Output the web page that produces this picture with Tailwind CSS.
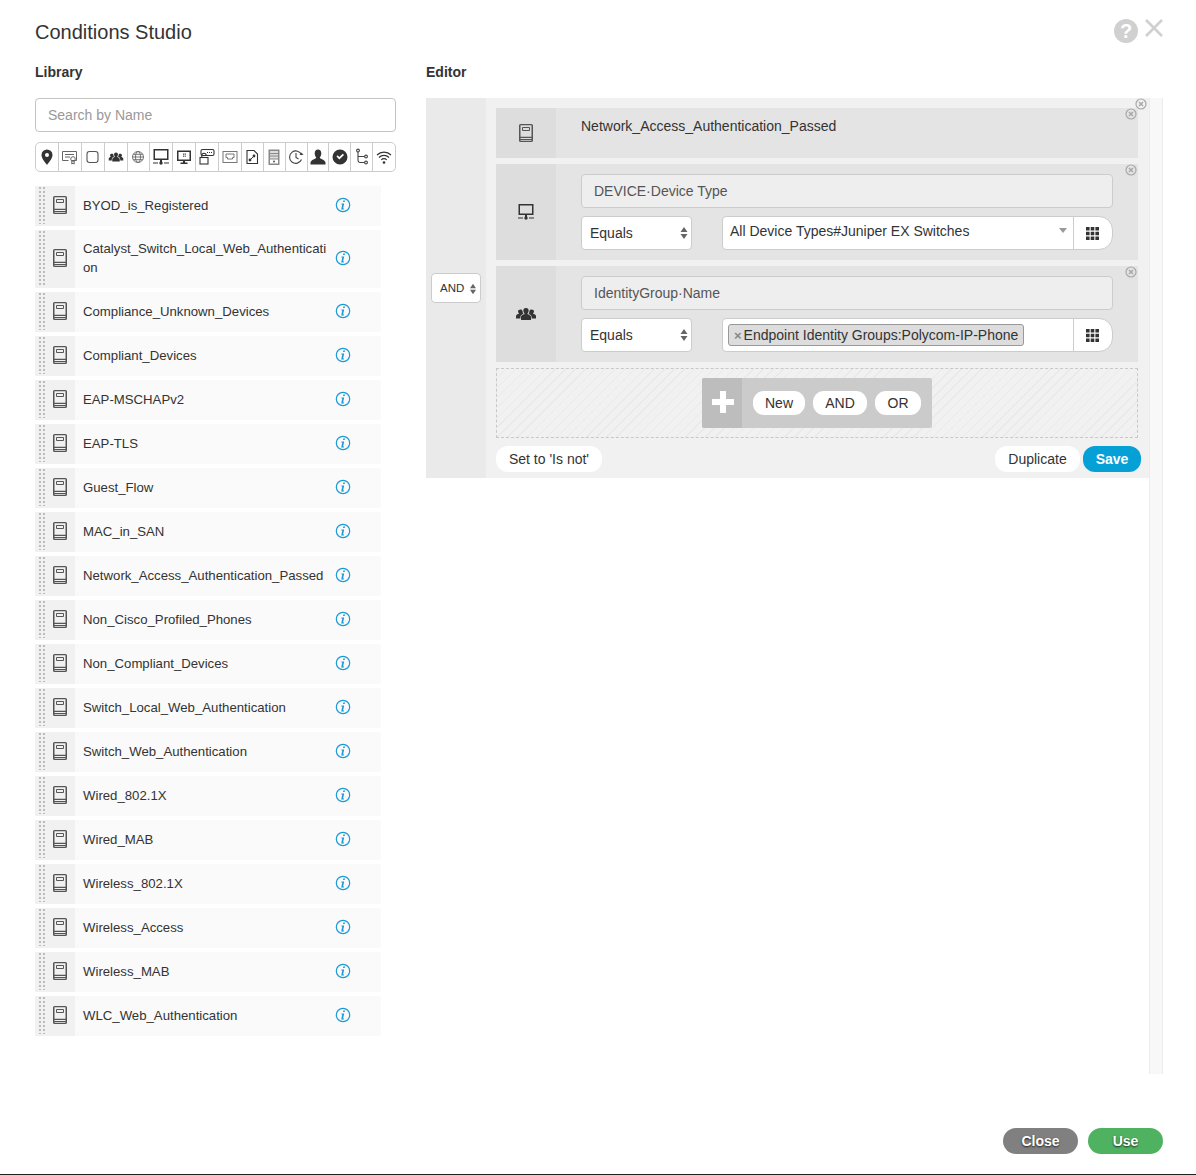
<!DOCTYPE html>
<html lang="en">
<head>
    <meta charset="UTF-8">
    <meta name="viewport" content="width=device-width, initial-scale=1.0">
    <script src="https://cdn.jsdelivr.net/npm/@tailwindcss/browser@4"></script>
    <title>Conditions Studio</title>
</head>
<body class="bg-white">
    <svg class="hidden">
      <symbol id="book" viewBox="0 0 16 20">
        <path fill="#555" fill-rule="evenodd" d="M2.500 1h11A1.500 1.500 0 0 1 15 2.500v15a1.500 1.500 0 0 1-1.500 1.500h-11A1.500 1.500 0 0 1 1 17.500v-15A1.500 1.500 0 0 1 2.500 1zM2.500 2.200v11.600h11V2.200zM2.500 15v1h11v-1zM2.500 17v.8h11V17z"/>
        <path fill="none" stroke="#555" d="M4.500 4.500h7v3h-7z"/>
      </symbol>
      <symbol id="info" viewBox="0 0 16 16">
        <circle cx="8" cy="8" r="6.700" fill="none" stroke="#1b9ad6" stroke-width="1.200"/>
        <path fill="#1b9ad6" d="M8.300 3.500h1.700l-.3 1.500H8zM6.500 6.500h2.700l-1.100 5h1l-.2.900H6.200l1.100-5h-1z"/>
      </symbol>
      <symbol id="x" viewBox="0 0 12 12">
        <circle cx="6" cy="6" r="5" fill="none" stroke="#a8a8a8" stroke-width="1.200"/>
        <path stroke="#a8a8a8" stroke-width="1.500" d="M4 4l4 4M8 4l-4 4"/>
      </symbol>
      <symbol id="grid" viewBox="0 0 13 13">
        <path fill="#333" d="M0 0h3.600v3.600H0zM4.700 0h3.600v3.600H4.700zM9.400 0H13v3.600H9.400zM0 4.700h3.600v3.600H0zM4.700 4.700h3.600v3.600H4.700zM9.400 4.700H13v3.600H9.400zM0 9.400h3.600V13H0zM4.700 9.400h3.600V13H4.700zM9.400 9.400H13V13H9.400z"/>
      </symbol>
      <symbol id="updown" viewBox="0 0 8 14">
        <path fill="#666" d="M4 1l3.500 5H.5zM4 13L.5 8h7z"/>
      </symbol>
      <symbol id="people" viewBox="0 0 20 16">
        <path fill="#333" d="M10 2a2.600 2.600 0 0 1 2.600 2.800c0 1.300-.6 2.500-1.300 3 .1.500 3.700 1.200 3.700 3.200v3H5v-3c0-2 3.600-2.700 3.700-3.200-.7-.5-1.300-1.700-1.300-3A2.600 2.600 0 0 1 10 2zM4.600 3.500c1 0 1.800.7 2 1.700 0 1 .3 2 .8 2.600-1.200.6-3 1.400-3 3.200v1.500H0V10c0-1.600 2.800-2 3-2.500-.6-.5-1-1.300-1-2.200 0-1 1.200-1.800 2.600-1.800zM15.400 3.500c1.400 0 2.600.8 2.600 1.800 0 .9-.4 1.700-1 2.200.2.500 3 .9 3 2.500v2.500h-4.400V11c0-1.800-1.800-2.600-3-3.200.5-.6.800-1.600.8-2.600.2-1 1-1.700 2-1.700z"/>
      </symbol>
      <symbol id="netdev" viewBox="0 0 18 18">
        <path fill="#333" fill-rule="evenodd" d="M1.500 1h15v11h-15zM3 2.500V10.500h12V2.500z"/>
        <path fill="#333" d="M8 12h2v2H8z"/>
        <circle cx="9" cy="15" r="1.700" fill="#333"/>
        <path stroke="#333" stroke-width="1.200" d="M1 15h5M12 15h5"/>
      </symbol>
    </svg>

    <div class="relative h-[1175px] w-[1196px] overflow-hidden border-b border-[#222] font-['Liberation_Sans',Arial,sans-serif] text-[14px] text-[#333]">
      <div class="flex h-[63px] items-start justify-between pl-[35px] pr-[32px] pt-[19px]">
        <h1 class="text-[20px] leading-[26px] text-[#333]">Conditions Studio</h1>
        <div class="flex items-start gap-[6px]">
          <div class="flex h-[24px] w-[24px] items-center justify-center rounded-full bg-[#d0d0d0] text-[20px] font-bold leading-none text-white">?</div>
          <svg class="-mt-[1px] h-[20px] w-[20px]" viewBox="0 0 20 20"><path stroke="#d0d0d0" stroke-width="2.600" d="M2 2l16 16M18 2L2 18"/></svg>
        </div>
      </div>

      <div class="flex">
        <!-- library -->
        <div class="ml-[35px] w-[361px]">
          <h2 class="h-[35px] text-[14px] font-bold leading-[18px]">Library</h2>
          <div class="flex h-[34px] items-center rounded-[4px] border border-[#c4c4c4] px-[12px] text-[#999]">Search by Name</div>
          <div class="mt-[10px] flex h-[30px] rounded-[5px] border border-[#ccc]" id="filters"></div>
          <div class="mt-[14px] flex w-[346px] flex-col gap-[4px]" id="library"></div>
        </div>

        <!-- editor -->
        <div class="ml-[30px] w-[737px]">
          <h2 class="h-[35px] text-[14px] font-bold leading-[18px]">Editor</h2>
          <div class="flex h-[976px]">
            <div class="w-[723px]">
              <div class="relative flex h-[380px] bg-[#f1f1f1]">
                <div class="flex w-[60px] items-center justify-center bg-[#eaeaea]">
                  <div class="flex h-[30px] w-[50px] items-center justify-between rounded-[4px] border border-[#ccc] bg-white pl-[8px] pr-[3px] pt-[1px] text-[11.5px]">AND<svg class="h-[12px] w-[8px]"><use href="#updown"/></svg></div>
                </div>
                <svg class="absolute left-[709px] top-0 h-[12px] w-[12px]"><use href="#x"/></svg>
                <div class="flex w-[642px] flex-col gap-[6px] pl-[10px] pt-[10px]">
                  <!-- row 1 -->
                  <div class="relative flex h-[50px] w-[642px] bg-[#e4e4e4]">
                    <div class="flex w-[60px] items-center justify-center bg-[#ddd]"><svg class="h-[20px] w-[16px]"><use href="#book"/></svg></div>
                    <div class="pl-[25px] pt-[9px] leading-[18px]">Network_Access_Authentication_Passed</div>
                    <svg class="absolute right-[1px] top-0 h-[12px] w-[12px]"><use href="#x"/></svg>
                  </div>
                  <!-- row 2 -->
                  <div class="relative flex h-[96px] w-[642px] bg-[#e4e4e4]">
                    <div class="flex w-[60px] items-center justify-center bg-[#ddd]"><svg class="h-[18px] w-[18px]"><use href="#netdev"/></svg></div>
                    <div class="flex w-[557px] flex-col gap-[8px] pl-[25px] pt-[10px]">
                      <div class="flex h-[34px] items-center rounded-[4px] border border-[#ccc] bg-[#eee] pl-[12px] text-[#555]">DEVICE·Device Type</div>
                      <div class="flex gap-[30px]">
                        <div class="flex h-[34px] w-[111px] items-center justify-between rounded-[4px] border border-[#ccc] bg-white pl-[8px] pr-[3px]">Equals<svg class="h-[14px] w-[8px]"><use href="#updown"/></svg></div>
                        <div class="flex h-[34px] w-[391px] rounded-l-[4px] rounded-r-[14px] border border-[#ccc] bg-white">
                          <div class="flex flex-1 items-center justify-between pl-[7px] pr-[6px] leading-[30px]"><span class="-mt-[4px]">All Device Types#Juniper EX Switches</span><span class="-mt-[6px] h-0 w-0 border-x-[4px] border-t-[5px] border-x-transparent border-t-[#999]"></span></div>
                          <div class="flex w-[39px] items-center justify-center border-l border-[#ccc] pr-[1px]"><svg class="h-[13px] w-[13px]"><use href="#grid"/></svg></div>
                        </div>
                      </div>
                    </div>
                    <svg class="absolute right-[1px] top-0 h-[12px] w-[12px]"><use href="#x"/></svg>
                  </div>
                  <!-- row 3 -->
                  <div class="relative flex h-[96px] w-[642px] bg-[#e4e4e4]">
                    <div class="flex w-[60px] items-center justify-center bg-[#ddd]"><svg class="h-[16px] w-[20px]"><use href="#people"/></svg></div>
                    <div class="flex w-[557px] flex-col gap-[8px] pl-[25px] pt-[10px]">
                      <div class="flex h-[34px] items-center rounded-[4px] border border-[#ccc] bg-[#eee] pl-[12px] text-[#555]">IdentityGroup·Name</div>
                      <div class="flex gap-[30px]">
                        <div class="flex h-[34px] w-[111px] items-center justify-between rounded-[4px] border border-[#ccc] bg-white pl-[8px] pr-[3px]">Equals<svg class="h-[14px] w-[8px]"><use href="#updown"/></svg></div>
                        <div class="flex h-[34px] w-[391px] rounded-l-[4px] rounded-r-[14px] border border-[#ccc] bg-white">
                          <div class="flex flex-1 items-center pl-[5px]">
                            <div class="flex h-[22px] items-center rounded-[3px] border border-[#999] bg-[#ddd] pl-[5px] pr-[5px]"><span class="mr-[2px] text-[13px] font-bold leading-none text-[#888]">×</span>Endpoint Identity Groups:Polycom-IP-Phone</div>
                          </div>
                          <div class="flex w-[39px] items-center justify-center border-l border-[#ccc] pr-[1px]"><svg class="h-[13px] w-[13px]"><use href="#grid"/></svg></div>
                        </div>
                      </div>
                    </div>
                    <svg class="absolute right-[1px] top-0 h-[12px] w-[12px]"><use href="#x"/></svg>
                  </div>
                  <!-- drop zone -->
                  <div class="flex h-[70px] w-[642px] items-center justify-center border border-dashed border-[#c8c8c8] bg-[repeating-linear-gradient(135deg,#f1f1f1_0,#f1f1f1_6px,#e9e9e9_6px,#e9e9e9_7px)]">
                    <div class="flex h-[50px] w-[230px] rounded-[2px] bg-[#cbcbcb]">
                      <div class="flex w-[40px] items-center justify-center rounded-l-[2px] bg-[#bdbdbd]">
                        <svg class="-mt-[2px] ml-[2px] h-[24px] w-[24px]" viewBox="0 0 24 24"><path fill="#fff" d="M9 1h6v8h8v6h-8v8H9v-8H1V9h8z"/></svg>
                      </div>
                      <div class="flex items-center gap-[8px] pl-[11px]">
                        <div class="flex h-[24px] w-[52px] items-center justify-center rounded-[11px] bg-white">New</div>
                        <div class="flex h-[24px] w-[54px] items-center justify-center rounded-[11px] bg-white">AND</div>
                        <div class="flex h-[24px] w-[46px] items-center justify-center rounded-[11px] bg-white">OR</div>
                      </div>
                    </div>
                  </div>
                  <!-- actions -->
                  <div class="mt-[2px] flex h-[26px] w-[645px] justify-between">
                    <div class="flex w-[106px] items-center justify-center rounded-[12px] bg-white">Set to 'Is not'</div>
                    <div class="flex gap-[3px]">
                      <div class="flex w-[85px] items-center justify-center rounded-[12px] bg-white">Duplicate</div>
                      <div class="flex w-[58px] items-center justify-center rounded-[12px] bg-[#05a0d6] font-bold text-white">Save</div>
                    </div>
                  </div>
                </div>
              </div>
            </div>
            <div class="w-[14px] border-x border-[#ececec] bg-[#f8f8f8]"></div>
          </div>
        </div>
      </div>

      <!-- footer -->
      <div class="mr-[33px] mt-[54px] flex justify-end gap-[10px]">
        <div class="flex h-[26px] w-[75px] items-center justify-center rounded-[13px] bg-[#808080] font-bold text-white [text-shadow:0_1px_2px_rgba(0,0,0,0.8)]">Close</div>
        <div class="flex h-[26px] w-[75px] items-center justify-center rounded-[13px] bg-[#4fb261] font-bold text-white [text-shadow:0_1px_2px_rgba(0,0,0,0.8)]">Use</div>
      </div>
    </div>

    <script>
        const names = ["BYOD_is_Registered","Catalyst_Switch_Local_Web_Authentication","Compliance_Unknown_Devices","Compliant_Devices","EAP-MSCHAPv2","EAP-TLS","Guest_Flow","MAC_in_SAN","Network_Access_Authentication_Passed","Non_Cisco_Profiled_Phones","Non_Compliant_Devices","Switch_Local_Web_Authentication","Switch_Web_Authentication","Wired_802.1X","Wired_MAB","Wireless_802.1X","Wireless_Access","Wireless_MAB","WLC_Web_Authentication"];
        var ll = "";
        for (const name of names) {
            ll = ll + `<div class="flex min-h-[40px] items-stretch bg-[#fafafa]">
              <div class="relative flex w-[40px] shrink-0 items-center justify-center bg-[#f1f1f1] pl-[9px]">
                <div class="absolute bottom-[2px] left-[2px] top-[1px] w-[8px] bg-[conic-gradient(#bbb_25%,transparent_0)] bg-[length:4px_4px]"></div>
                <svg class="-mt-[2px] h-[20px] w-[16px]"><use href="#book"/></svg>
              </div>
              <div class="w-[252px] self-center break-all pb-[11px] pl-[8px] pt-[9px] text-[13.2px] leading-[19px]">${name}</div>
              <div class="flex items-center pl-[8px]"><svg class="-mt-[2px] h-[16px] w-[16px]"><use href="#info"/></svg></div>
            </div>`;
        }
        document.getElementById('library').innerHTML = ll;

        const filterIcons = [
          ['w-[23px]','<path fill="#333" fill-rule="evenodd" d="M10 2.500a5.500 5.500 0 0 1 5.500 5.500c0 3.500-3.500 7-5.500 10-2-3-5.500-6.500-5.500-10A5.500 5.500 0 0 1 10 2.500zM10 6a2 2 0 1 0 0 4 2 2 0 0 0 0-4z"/>'],
          ['w-[23px]','<g fill="none" stroke="#666"><path d="M2.500 4.500h14v9h-5"/><path d="M2.500 4.500v9h6"/><path d="M5 7.500h9M5 10h5"/><circle cx="13" cy="12" r="2.300"/><path d="M11.800 14v3l1.200-.8 1.200.8v-3"/></g>'],
          ['w-[23px]','<rect x="4" y="4.500" width="11" height="11" rx="2.500" fill="none" stroke="#555" stroke-width="1.100"/>'],
          ['w-[23px]','<use href="#people" x="2.500" y="4" width="15" height="12"/>'],
          ['w-[23px]','<g fill="none" stroke="#666" stroke-width=".9"><circle cx="10" cy="10" r="5.500"/><ellipse cx="10" cy="10" rx="2.500" ry="5.500"/><path d="M4.500 10h11M5.200 7.300h9.600M5.200 12.700h9.600"/></g>'],
          ['w-[23px]','<use href="#netdev" x="1" y="1" width="18" height="18"/>'],
          ['w-[23px]','<path fill="#333" fill-rule="evenodd" d="M3 3.500h14V14H11v1.500h2.500V17h-7v-1.500H9V14H3zM4.500 5v7.500h11V5z"/><path fill="#666" d="M9 6.500h1v1.400H9zM10.600 6.300h1.200v1.600h-1.200zM9 8.500h1v1.400H9zM10.600 8.500h1.200v1.600h-1.200z"/>'],
          ['w-[23px]','<g fill="none" stroke="#333" stroke-width="1.100"><rect x="4" y="2.500" width="13" height="6" rx="1.500"/><rect x="3" y="10.500" width="8" height="6.500"/><path d="M4.800 10.500V8.500a2.200 2.200 0 0 1 4.400 0"/></g><path fill="#333" d="M10 5h1v1h-1zM12 5h1v1h-1zM14 5h1v1h-1z"/>'],
          ['w-[23px]','<g fill="none" stroke="#777"><rect x="3" y="4.500" width="14" height="11"/><path d="M6 7h8v3.500h-1.500V12h-5v-1.500H6z"/></g>'],
          ['w-[22px]','<path fill="none" stroke="#333" stroke-width="1.100" d="M5 3.500h7l3.500 3.500v9.500H5z"/><circle cx="8" cy="13" r="1.400" fill="#333"/><circle cx="12" cy="9" r="1.400" fill="#333"/><path stroke="#333" d="M8 13l4-4"/>'],
          ['w-[22px]','<path fill="#888" d="M4.500 2.500h11V18h-11z"/><path fill="#ddd" d="M6 4h8v7.500H6z"/><path stroke="#888" d="M6 6.500h8M6 9h8"/><path fill="#fff" d="M6 12.500h8V16.500H6z"/><circle cx="10" cy="14.500" r="1" fill="#555"/>'],
          ['w-[22px]','<g fill="none" stroke="#444" stroke-width="1.100"><path d="M15.500 12.500A6.200 6.200 0 1 1 15.600 8"/><path d="M10 6v4.500l2.500 1.500"/></g><path fill="#444" d="M13.500 8h4l-2-2.500z"/>'],
          ['w-[22px]','<path fill="#333" d="M10 2.500c2 0 3.300 1.500 3.300 3.800 0 1.800-.8 3.300-1.500 4.200-.3 1.500 5.700 2 5.700 5.500V17.500h-15V16c0-3.500 6-4 5.700-5.500-.7-.9-1.500-2.400-1.500-4.200C6.700 4 8 2.500 10 2.500z"/>'],
          ['w-[22px]','<path fill="#333" fill-rule="evenodd" d="M10 2.500a7.500 7.500 0 1 1 0 15 7.500 7.500 0 0 1 0-15zM6.500 9.500L9.300 12.500 14 8l-1.200-1.200-3.500 3.300-1.700-1.800z"/>'],
          ['w-[22px]','<g fill="none" stroke="#444" stroke-width="1.100"><circle cx="6" cy="3.500" r="1.400"/><circle cx="14" cy="9.500" r="1.400"/><circle cx="14" cy="15.500" r="1.400"/><path d="M6 5v8a2.500 2.500 0 0 0 2.500 2.500h4M6 9.500h6.500"/></g>'],
          ['w-[22px]','<g fill="none" stroke="#333" stroke-width="1.200"><path d="M3 8a10 10 0 0 1 14 0"/><path d="M5 10.500a7 7 0 0 1 10 0"/><path d="M7.300 12.800a3.800 3.800 0 0 1 5.400 0"/></g><circle cx="10" cy="15.500" r="1.300" fill="#333"/>']
        ];
        var ff = "";
        filterIcons.forEach(function (icon, i) {
            const sep = i < filterIcons.length - 1 ? 'border-r border-[#ccc]' : '';
            ff = ff + `<div class="flex ${icon[0]} items-center justify-center ${sep}"><svg class="h-[20px] w-[20px]" viewBox="0 0 20 20">${icon[1]}</svg></div>`;
        });
        document.getElementById('filters').innerHTML = ff;
    </script>
</body>
</html>
